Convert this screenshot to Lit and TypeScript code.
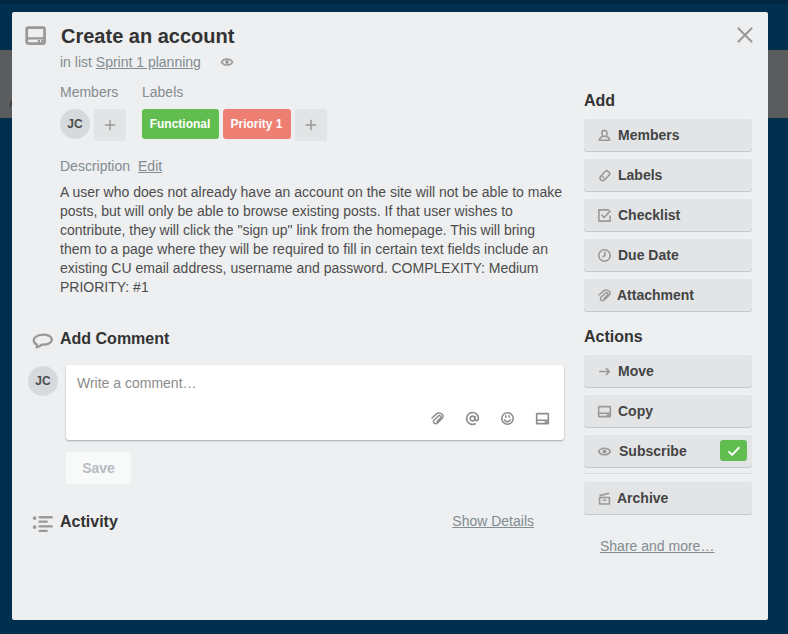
import { LitElement, html, svg, css } from "lit";
import { customElement, property } from "lit/decorators.js";

const ICONS: Record<string, unknown> = {
  card: svg`<rect x="1.9" y="2.6" width="12.4" height="11" rx="1" stroke-width="1.9"/><path d="M2 10h12.3" stroke-width="1.6"/><path d="M9.5 12.1h1.6M12 12.1h1.6" stroke-width="1.8"/>`,
  copy: svg`<rect x="2.5" y="3.4" width="11" height="9.4" rx=".4"/><path d="M2.6 9.6h10.8M10 11.4h2.8"/>`,
  eye: svg`<path d="M2.4 8C4.8 3.9 11.2 3.9 13.6 8 11.2 12.1 4.8 12.1 2.4 8z"/><circle cx="8" cy="8" r="1.9" fill="currentColor" stroke="none"/>`,
  member: svg`<path d="M6.4 8.9C3.9 9.5 3.2 10.6 3.2 12.4h9.6c0-1.8-.7-2.9-3.2-3.5"/><path d="M5.6 5.5c0-3.1 4.8-3.1 4.8 0 0 1.7-.9 3.5-2.4 3.5S5.6 7.2 5.6 5.5z"/>`,
  label: svg`<path d="M9.3 3.6c.5-.4 1-.4 1.4 0l2.1 2.1c.4.4.4 1 0 1.5l-5 5c-1 1-2.2.9-3.2-.1-1.1-1.1-1.1-2.3-.1-3.4z"/><path d="M5.6 8.4l2.2 2.2" stroke-width="1.2"/>`,
  check: svg`<path d="M12.2 2.7H2.7v10.6h10.6V8.1M5.2 7.3l2.5 2.6 6-6.5"/>`,
  clock: svg`<circle cx="8" cy="8" r="5.4"/><path d="M8.3 4.5v3.7L6 9.2"/>`,
  clip: svg`<path d="M2.8 7.6L6.9 3.9C9.2 1.9 13.6 3.1 13.2 6.2c-.1.9-.6 1.5-1.2 2.1l-4 3.8c-2.4 2.1-5.1-.5-3.2-2.6l4-3.7c1.6-1.4 3.4.3 2 1.8L7.5 10.8" stroke-width="1.35" stroke-linecap="round"/>`,
  arrow: svg`<path d="M3 8h9.6M9.4 4.8L12.6 8l-3.2 3.2"/>`,
  at: svg`<circle cx="8" cy="8" r="2.2"/><path d="M10.3 5.7v3.1c0 2 3.3 1.4 3.3-.8A5.6 5.6 0 1 0 11 12.7"/>`,
  smile: svg`<circle cx="8" cy="8" r="5.4"/><path d="M6.4 5v2.4M9.6 5v2.4M5 8.8c.8 2.8 5.2 2.8 6 0"/>`,
  archive: svg`<path d="M3.4 7.1h9.2v6.1H3.4zM6.4 9.6h3.2"/><path d="M3.3 5.3l9.1-2.3"/>`,
  plus: svg`<path d="M8 2.8v10.4M2.8 8h10.4" stroke-width="1.5"/>`,
  close: svg`<path d="M2.8 2.8l10.4 10.4M13.2 2.8L2.8 13.2" stroke-width="1.5"/>`,
  tick: svg`<path d="M2.6 8.4l3.5 3.5 7.3-7.6" stroke-width="2"/>`,
  comment: svg`<path d="M3.7 11.1C1 9.9.5 6.9 2.8 5.2 5.7 3.1 11.4 3 13.8 4.9c2.3 1.9 1.3 4.7-1.5 5.6-1.3.4-3 .7-4.8.6-.9 1.2-2.2 1.9-4 2.1.5-.6.5-1.3.2-2.1z" stroke-width="1.8"/>`,
  activity: svg`<g stroke-width="1.8" stroke-linecap="round"><path d="M5.8 3.2h9.2M5.8 6.6h5.4M5.8 10.2h9.2M5.8 13.6h5.4"/></g><circle cx="2" cy="3.9" r="1.4" fill="currentColor" stroke="none"/><circle cx="2" cy="10.7" r="1.4" fill="currentColor" stroke="none"/>`,
};

@customElement("ui-icon")
class UiIcon extends LitElement {
  @property() name = "";
  @property({ type: Number }) size = 18;

  static styles = css`
    :host { display: inline-flex; flex: none; }
    svg { display: block; fill: none; stroke: currentColor; stroke-width: 1.5; stroke-linejoin: round; }
  `;

  render() {
    return html`<svg viewBox="0 0 16 16" width=${this.size} height=${this.size}>${ICONS[this.name]}</svg>`;
  }
}

@customElement("side-button")
class SideButton extends LitElement {
  @property() icon = "";
  @property() label = "";
  @property({ type: Boolean }) on = false;

  static styles = css`
    :host { display: block; margin-bottom: 8px; }
    .button {
      display: flex; align-items: center; height: 32px; box-sizing: border-box;
      padding: 0 5px 0 12px; border-radius: 3px; background: #e2e4e6;
      box-shadow: 0 1px 0 0 #c4c9cc; color: #444; font-weight: 700; font-size: 14px;
    }
    ui-icon { color: #999; margin-right: 5px; }
    .text { flex: 1; }
    .wide { margin-left: 1px; }
    .tight { margin-left: -1px; }
    .on {
      display: flex; align-items: center; justify-content: center;
      width: 27px; height: 21px; margin-top: -1px; border-radius: 3px; background: #61bd4f;
    }
    .on ui-icon { color: #fff; margin: 0; }
  `;

  render() {
    const shift = this.on ? "wide" : this.label.startsWith("A") ? "tight" : "";
    return html`<div class="button">
      <ui-icon name=${this.icon} size="17"></ui-icon>
      <span class="text ${shift}">${this.label}</span>
      ${this.on ? html`<span class="on"><ui-icon name="tick" size="16"></ui-icon></span>` : ""}
    </div>`;
  }
}

@customElement("app-root")
class AppRoot extends LitElement {
  static styles = css`
    :host {
      display: block; height: 634px; box-sizing: border-box; padding: 12px 20px 14px 12px;
      background: linear-gradient(#00273f 0 4px, #00304d 4px 50px, #5b5c5e 50px 118px, #00304d 118px);
      font: 14px/20px "Liberation Sans", Arial, sans-serif; color: #4d4d4d;
    }
    .dialog {
      position: relative;
      display: grid; grid-template-columns: 552px 168px; column-gap: 20px;
      height: 608px; border-radius: 2px; background: #edeff0;
    }
    .main { padding-left: 12px; padding-top: 12px; }
    .head { display: flex; height: 24px; align-items: center; color: #999; }
    .head ui-icon { margin-top: -2px; }
    h1 { margin: 0 0 0 14px; font-size: 20px; line-height: 24px; color: #333; }
    h2 { margin: 0; font-size: 16px; line-height: 20px; color: #333; }
    a { color: #838c91; text-decoration: underline; }
    .inset { padding-left: 36px; color: #838c91; }
    .inlist { display: flex; align-items: center; margin-top: 4px; height: 20px; white-space: pre; }
    .inlist ui-icon { margin-left: 18px; color: #999; }
    .meta { display: flex; gap: 16px; margin-top: 10px; }
    .row { display: flex; gap: 4px; margin-top: 7px; }
    .avatar {
      display: flex; align-items: center; justify-content: center; flex: none;
      width: 30px; height: 30px; border-radius: 50%; background: #d6dadc;
      color: #4d4d4d; font-size: 12px; font-weight: 700;
    }
    .add {
      display: flex; align-items: center; justify-content: center;
      width: 32px; height: 32px; border-radius: 2px; background: #e2e4e6; color: #999;
    }
    .tag {
      height: 30px; line-height: 30px; box-sizing: border-box; border-radius: 3px; text-align: center;
      padding-right: 1px; color: #fff; font-size: 12px; font-weight: 700; white-space: nowrap;
    }
    .green { background: #61bd4f; width: 77px; }
    .red { background: #ef7e72; width: 68px; }
    .deschead { display: flex; gap: 8px; margin-top: 15px; }
    .description { margin-top: 7px; line-height: 19px; white-space: pre; color: #4d4d4d; }
    .section { display: flex; align-items: center; height: 20px; padding-left: 8px; color: #999; }
    .section ui-icon { margin: 3px 7px 0 0; }
    .comment { margin-top: 32px; }
    .compose { display: flex; gap: 8px; margin: 16px 0 0 4px; }
    .compose .avatar { margin-top: 1px; }
    .box {
      display: flex; flex-direction: column; justify-content: space-between;
      width: 498px; height: 75px; box-sizing: border-box; padding: 8px 13px 13px 11px;
      border-radius: 3px; background: #fff; box-shadow: 0 1px 2px rgba(0, 0, 0, .3); color: #8c8c8c;
    }
    .tools { display: flex; justify-content: flex-end; gap: 18px; color: #8c8c8c; }
    .save {
      margin: 12px 0 0 42px; width: 65px; height: 32px; line-height: 32px; border-radius: 3px;
      background: #f8f9f9; color: #b6bbbf; text-align: center; font-weight: 700;
    }
    .activity { margin-top: 28px; padding-right: 30px; }
    .activity h2 { flex: 1; }
    .activity a { margin-top: -2px; }
    .side { display: flex; flex-direction: column; }
    .close { align-self: flex-end; height: 20px; margin: 12px -4px 47px 0; color: #999; }
    .side h2 { margin-bottom: 8px; }
    .side .actions { margin-top: 8px; }
    .rule { height: 1px; margin: -2px 0 8px; background: #d6dadc; }
    .share { margin: 14px 0 0 16px; }
    .behind { position: absolute; left: 9px; top: 92px; color: #35383a; }
  `;

  render() {
    return html`
      <span class="behind">A</span>
      <div class="dialog">
        <div class="main">
          <div class="head"><ui-icon name="card" size="23"></ui-icon><h1>Create an account</h1></div>
          <div class="inset">
            <div class="inlist">in list <a>Sprint 1 planning</a><ui-icon name="eye" size="16"></ui-icon></div>
            <div class="meta">
              <div>Members
                <div class="row"><span class="avatar">JC</span><span class="add"><ui-icon name="plus" size="16"></ui-icon></span></div>
              </div>
              <div>Labels
                <div class="row">
                  <span class="tag green">Functional</span><span class="tag red">Priority 1</span>
                  <span class="add"><ui-icon name="plus" size="16"></ui-icon></span>
                </div>
              </div>
            </div>
            <div class="deschead">Description <a>Edit</a></div>
            <div class="description">${[
              "A user who does not already have an account on the site will not be able to make",
              "posts, but will only be able to browse existing posts. If that user wishes to",
              'contribute, they will click the "sign up" link from the homepage. This will bring',
              "them to a page where they will be required to fill in certain text fields include an",
              "existing CU email address, username and password. COMPLEXITY: Medium",
              "PRIORITY: #1",
            ].join("\n")}</div>
          </div>
          <div class="section comment"><ui-icon name="comment" size="21"></ui-icon><h2>Add Comment</h2></div>
          <div class="compose">
            <span class="avatar">JC</span>
            <div class="box">
              <span>Write a comment…</span>
              <div class="tools">
                ${["clip", "at", "smile", "copy"].map((n) => html`<ui-icon name=${n} size="17"></ui-icon>`)}
              </div>
            </div>
          </div>
          <div class="save">Save</div>
          <div class="section activity"><ui-icon name="activity" size="21"></ui-icon><h2>Activity</h2><a>Show Details</a></div>
        </div>
        <div class="side">
          <ui-icon class="close" name="close" size="22"></ui-icon>
          <h2>Add</h2>
          <side-button icon="member" label="Members"></side-button>
          <side-button icon="label" label="Labels"></side-button>
          <side-button icon="check" label="Checklist"></side-button>
          <side-button icon="clock" label="Due Date"></side-button>
          <side-button icon="clip" label="Attachment"></side-button>
          <h2 class="actions">Actions</h2>
          <side-button icon="arrow" label="Move"></side-button>
          <side-button icon="copy" label="Copy"></side-button>
          <side-button icon="eye" label="Subscribe" on></side-button>
          <div class="rule"></div>
          <side-button icon="archive" label="Archive"></side-button>
          <a class="share">Share and more…</a>
        </div>
      </div>
    `;
  }
}
